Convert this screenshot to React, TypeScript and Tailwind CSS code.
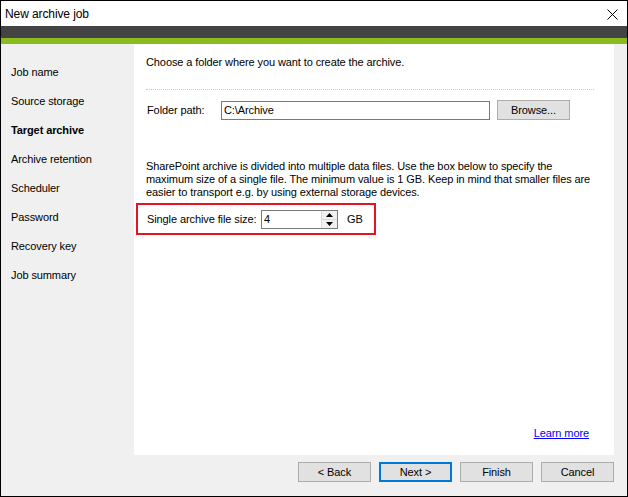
import { useState } from "react";

const navItems = [
  "Job name",
  "Source storage",
  "Target archive",
  "Archive retention",
  "Scheduler",
  "Password",
  "Recovery key",
  "Job summary",
];

function WinButton({ label, focused }: { label: string; focused?: boolean }) {
  return (
    <button
      className={
        "flex h-[20px] w-[73px] items-center justify-center bg-[#e1e1e1] text-black " +
        (focused ? "border-2 border-[#0078d7]" : "border border-[#adadad]")
      }
    >
      {label}
    </button>
  );
}

export default function App() {
  const [size, setSize] = useState(4);
  const active = "Target archive";

  return (
    <div
      className="flex h-[497px] w-[628px] flex-col border border-black bg-[#f0f0f0] text-[11px] tracking-[-0.1px] text-black"
      style={{ fontFamily: '"Segoe UI", "Liberation Sans", Arial, sans-serif' }}
    >
      {/* title bar */}
      <div className="flex h-[25px] items-center justify-between bg-white pl-[4px] pr-[9px]">
        <span className="text-[12px]">New archive job</span>
        <svg width="11" height="11" viewBox="0 0 11 11" className="mt-[1px]">
          <path d="M0.5 0.5 L10.5 10.5 M10.5 0.5 L0.5 10.5" stroke="#000" strokeWidth="1" />
        </svg>
      </div>
      <div className="h-[12px] bg-[#444444]" />
      <div className="h-[6px] bg-[#8cbb1e]" />

      <div className="flex h-[411px]">
        {/* steps */}
        <div className="flex w-[133px] flex-col pl-[10px] pt-[14px]">
          {navItems.map((item) => (
            <div
              key={item}
              className={"flex h-[29px] items-center " + (item === active ? "font-bold" : "")}
            >
              {item}
            </div>
          ))}
        </div>

        {/* page */}
        <div className="flex w-[480px] flex-col bg-white pl-[12px] pr-[20px] pt-[10px]">
          <p className="leading-[16px]">Choose a folder where you want to create the archive.</p>
          <div className="mt-[19px] border-t border-dotted border-[#c8c8c8]" />

          <div className="mt-[10px] flex items-center">
            <span className="w-[75px] pl-[1px]">Folder path:</span>
            <input
              readOnly
              value="C:\Archive"
              className="h-[19px] w-[269px] border border-[#7a7a7a] px-[2px] outline-none"
            />
            <div className="ml-[7px]">
              <WinButton label="Browse..." />
            </div>
          </div>

          <p className="mt-[40px] whitespace-nowrap leading-[13px]">
            SharePoint archive is divided into multiple data files. Use the box below to specify the
            <br />
            maximum size of a single file. The minimum value is 1 GB. Keep in mind that smaller files are
            <br />
            easier to transport e.g. by using external storage devices.
          </p>

          <div className="ml-[-10px] mt-[4px] flex h-[32px] w-[240px] items-center border-2 border-[#e81123] pl-[9px]">
            <span className="w-[114px] whitespace-nowrap">Single archive file size:</span>
            <div className="flex h-[19px] w-[77px] border border-[#7a7a7a]">
              <input
                value={size}
                onChange={(e) => setSize(Number(e.target.value) || 0)}
                className="w-[59px] px-[2px] outline-none"
              />
              <div className="flex w-[16px] flex-col border-l border-[#dadada] bg-[#f0f0f0]">
                <button
                  onClick={() => setSize(size + 1)}
                  className="flex flex-1 items-center justify-center border-b border-[#dadada]"
                >
                  <svg width="7" height="4" viewBox="0 0 7 4">
                    <path d="M3.5 0 L7 4 L0 4 Z" fill="#000" />
                  </svg>
                </button>
                <button
                  onClick={() => setSize(Math.max(1, size - 1))}
                  className="flex flex-1 items-center justify-center"
                >
                  <svg width="7" height="4" viewBox="0 0 7 4">
                    <path d="M0 0 L7 0 L3.5 4 Z" fill="#000" />
                  </svg>
                </button>
              </div>
            </div>
            <span className="ml-[9px]">GB</span>
          </div>

          <div className="mb-[14px] mt-auto flex justify-end pr-[5px]">
            <a href="#" className="text-[#0000ff] underline">
              Learn more
            </a>
          </div>
        </div>
      </div>

      {/* footer */}
      <div className="flex justify-end gap-[8px] pr-[13px] pt-[7px]">
        <WinButton label="< Back" />
        <WinButton label="Next >" focused />
        <WinButton label="Finish" />
        <WinButton label="Cancel" />
      </div>
    </div>
  );
}
